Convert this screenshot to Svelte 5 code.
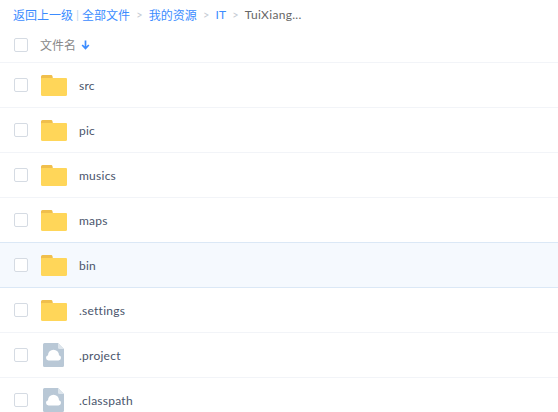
<script>
    const crumbs = ["全部文件", "我的资源", "IT"];
    const files = [
        { name: "src", type: "folder" },
        { name: "pic", type: "folder" },
        { name: "musics", type: "folder" },
        { name: "maps", type: "folder" },
        { name: "bin", type: "folder", hover: true },
        { name: ".settings", type: "folder" },
        { name: ".project", type: "file" },
        { name: ".classpath", type: "file" },
    ];
</script>

<div class="page">
    <!--BREADCRUMB-->
    <div class="crumbs">
        <a href="#back">返回上一级</a>
        <span class="sep">|</span>
        {#each crumbs as crumb, i}
            <a href="#c">{crumb}</a>
            <span class="arrow">&gt;</span>
        {/each}
        <span class="current">TuiXiang...</span>
    </div>

    <!--HEADER-->
    <div class="head">
        <span class="check"></span>
        <span class="head_label">文件名</span>
        <svg class="sort" width="9" height="10" viewBox="0 0 9 10">
            <path d="M4.500 0.500V8M1.200 5L4.500 8.600L7.800 5" fill="none" stroke="#3b8cff" stroke-width="1.700"/>
        </svg>
    </div>

    <!--ROWS-->
    {#each files as file}
        <div class="row" class:row_hover={file.hover}>
            <span class="check"></span>
            <span class="icon">
                {#if file.type === "folder"}
                    <svg class="folder" width="26" height="21" viewBox="0 0 26 21">
                        <path d="M0 1.500A1.500 1.500 0 0 1 1.500 0H10A1.500 1.500 0 0 1 11.500 1.200L12 4H0Z" fill="#f0bf4c"/>
                        <path d="M0 4A1 1 0 0 1 1 3H25A1 1 0 0 1 26 4V19.500A1.500 1.500 0 0 1 24.500 21H1.500A1.500 1.500 0 0 1 0 19.500Z" fill="#ffd659"/>
                    </svg>
                {:else}
                    <svg class="file" width="21" height="24" viewBox="0 0 21 24">
                        <path d="M1.500 0H15L21 6V22.500A1.500 1.500 0 0 1 19.500 24H1.500A1.500 1.500 0 0 1 0 22.500V1.500A1.500 1.500 0 0 1 1.500 0Z" fill="#b9c8d6"/>
                        <path d="M15 0L21 6H16.500A1.500 1.500 0 0 1 15 4.500Z" fill="#dde5ec"/>
                        <path d="M7.500 17.500H5.500A2.700 2.700 0 0 1 5 12.200A5.500 5.500 0 0 1 16 12.200A2.700 2.700 0 0 1 15.500 17.500Z" fill="#fff"/>
                    </svg>
                {/if}
            </span>
            <span class="name">{file.name}</span>
        </div>
    {/each}
</div>

<style>
    :global(body) {
        margin: 0;
        background: #fff;
    }
    .page {
        height: 412px;
        overflow: hidden;
        font-family: Lato, "Noto Sans CJK SC", sans-serif;
        font-size: 12px;
    }
    .crumbs {
        display: flex;
        align-items: center;
        height: 28px;
        padding-left: 13px;
        white-space: nowrap;
    }
    .crumbs a {
        color: #3b8cff;
        text-decoration: none;
    }
    .sep {
        color: #c5d9ee;
        margin: 0 3px;
    }
    .arrow {
        color: #c5cbd3;
        margin: 0 6.2px;
        font-size: 11px;
    }
    .current {
        color: #666;
        letter-spacing: 0.3px;
    }
    .head {
        display: flex;
        align-items: center;
        height: 34px;
        padding-left: 14px;
        border-bottom: 1px solid #f2f4f8;
    }
    .check {
        width: 12px;
        height: 12px;
        border: 1px solid #d5dbe3;
        border-radius: 2px;
        background: #fff;
        flex: none;
    }
    .head_label {
        color: #888;
        margin-left: 12px;
        padding-bottom: 2px;
    }
    .sort {
        margin-left: 5px;
    }
    .row {
        display: flex;
        align-items: center;
        height: 44px;
        padding-left: 14px;
        border-bottom: 1px solid #f2f4f8;
    }
    .row_hover {
        background: #f5f9fe;
        border-bottom-color: #dbe8f6;
        box-shadow: 0 -1px 0 #dbe8f6;
    }
    .icon {
        width: 26px;
        margin-left: 13px;
        display: flex;
        justify-content: center;
        align-items: flex-start;
    }
    .folder {
        margin-top: 1px;
    }
    .file {
        margin-right: 1px;
    }
    .name {
        margin-left: 12px;
        padding-top: 1px;
        color: #4a556c;
        letter-spacing: 0.25px;
    }
</style>
